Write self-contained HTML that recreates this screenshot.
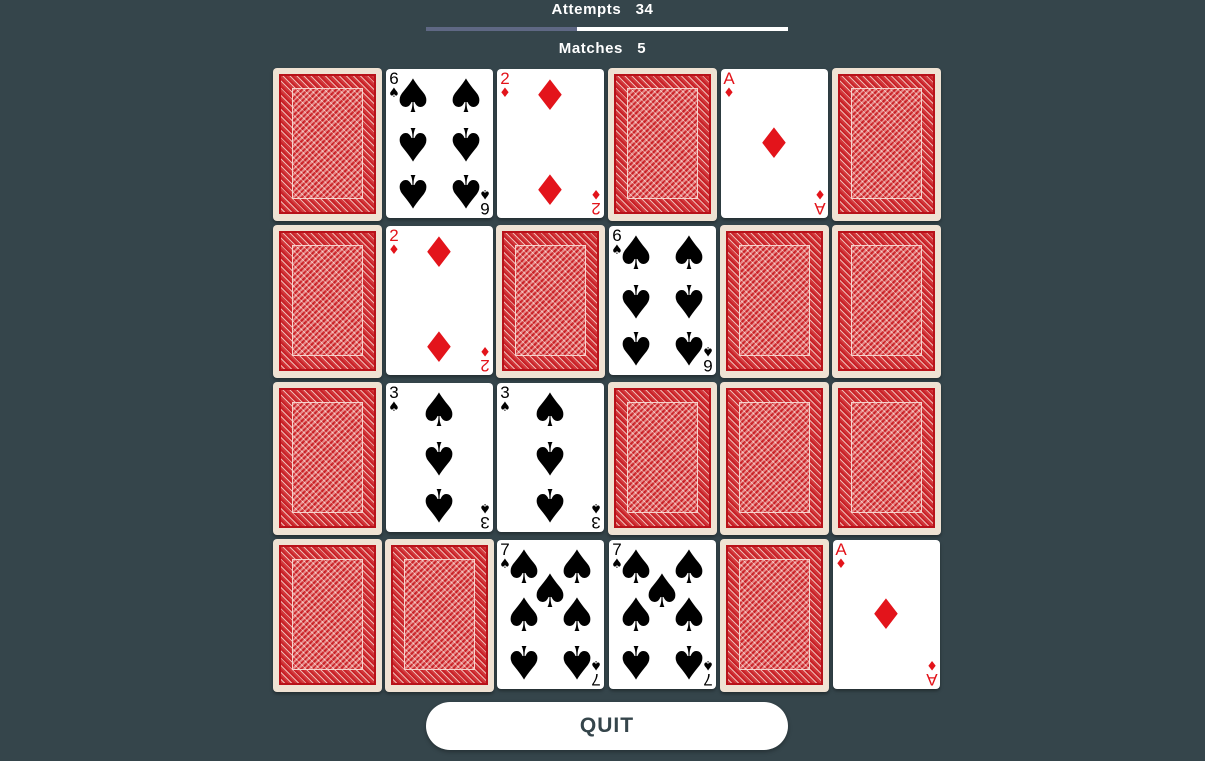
<!DOCTYPE html>
<html><head><style>
body{margin:0;width:1205px;height:761px;background:#35454b;position:relative;overflow:hidden;font-family:"Liberation Sans",sans-serif}
.t{position:absolute;left:0;width:1205px;text-align:center;color:#fff;font-size:15px;font-weight:bold;letter-spacing:0.6px}
.bar{position:absolute;left:426px;top:27px;width:362px;height:4px;background:#fff}
.bar i{position:absolute;left:0;top:0;width:151px;height:4px;background:#5f6884}
.b{position:absolute;width:109px;height:153px;border-radius:4px;background:#efe2d3;box-shadow:0 2px 3px rgba(0,0,0,.35)}
.b:before{content:"";position:absolute;left:6px;top:6px;right:6px;bottom:7px;border:2px solid #b8121a;background:repeating-linear-gradient(45deg,#d2393c 0 2px,#efb9b3 2px 3px,#c92128 3px 5px),#d23a3c;box-sizing:border-box}
.b:after{content:"";position:absolute;left:19px;top:20px;right:19px;bottom:22px;border:1px solid #f6d2cc;background:repeating-linear-gradient(-45deg,rgba(255,225,220,.5) 0 2px,rgba(200,30,35,.35) 2px 4px)}
.f{position:absolute;width:107px;height:149px;border-radius:4px;background:#fff;box-shadow:0 2px 3px rgba(0,0,0,.35)}
.p{position:absolute;font-family:"DejaVu Sans",sans-serif;font-size:46px;line-height:46px;transform:translate(-50%,-50%)}
.d .p{font-size:42px}
.r{transform:translate(-50%,-50%) rotate(180deg)}
.d{color:#e3141b}
.c{position:absolute;left:2px;top:2px;text-align:center;font-family:"Liberation Sans",sans-serif;font-size:17px;line-height:16px;width:12px}
.c small{display:block;font-family:"DejaVu Sans",sans-serif;font-size:13px;line-height:13px}
.c.br{left:auto;top:auto;right:2px;bottom:2px;transform:rotate(180deg)}
.q{position:absolute;left:426px;top:702px;width:362px;height:48px;border-radius:24px;background:#fff;color:#35454b;font-size:21px;font-weight:bold;text-align:center;line-height:48px;letter-spacing:1px;box-shadow:0 2px 4px rgba(0,0,0,.3)}
</style></head><body>
<div class="t" style="top:1px">Attempts&nbsp;&nbsp;&nbsp;34</div>
<div class="bar"><i></i></div>
<div class="t" style="top:40px">Matches&nbsp;&nbsp;&nbsp;5</div>

<div class="b" style="left:273px;top:68px"></div>
<div class="f" style="left:386px;top:69px"><div class="c">6<small>♠</small></div><div class="c br">6<small>♠</small></div>
<span class="p" style="left:27px;top:27px">♠</span><span class="p" style="left:80px;top:27px">♠</span><span class="p r" style="left:27px;top:75px">♠</span><span class="p r" style="left:80px;top:75px">♠</span><span class="p r" style="left:27px;top:122px">♠</span><span class="p r" style="left:80px;top:122px">♠</span></div>
<div class="f d" style="left:497px;top:69px"><div class="c">2<small>♦</small></div><div class="c br">2<small>♦</small></div>
<span class="p" style="left:53px;top:27px">♦</span><span class="p" style="left:53px;top:122px">♦</span></div>
<div class="b" style="left:608px;top:68px"></div>
<div class="f d" style="left:721px;top:69px"><div class="c">A<small>♦</small></div><div class="c br">A<small>♦</small></div>
<span class="p" style="left:53px;top:75px">♦</span></div>
<div class="b" style="left:832px;top:68px"></div>

<div class="b" style="left:273px;top:225px"></div>
<div class="f d" style="left:386px;top:226px"><div class="c">2<small>♦</small></div><div class="c br">2<small>♦</small></div>
<span class="p" style="left:53px;top:27px">♦</span><span class="p" style="left:53px;top:122px">♦</span></div>
<div class="b" style="left:496px;top:225px"></div>
<div class="f" style="left:609px;top:226px"><div class="c">6<small>♠</small></div><div class="c br">6<small>♠</small></div>
<span class="p" style="left:27px;top:27px">♠</span><span class="p" style="left:80px;top:27px">♠</span><span class="p r" style="left:27px;top:75px">♠</span><span class="p r" style="left:80px;top:75px">♠</span><span class="p r" style="left:27px;top:122px">♠</span><span class="p r" style="left:80px;top:122px">♠</span></div>
<div class="b" style="left:720px;top:225px"></div>
<div class="b" style="left:832px;top:225px"></div>

<div class="b" style="left:273px;top:382px"></div>
<div class="f" style="left:386px;top:383px"><div class="c">3<small>♠</small></div><div class="c br">3<small>♠</small></div>
<span class="p" style="left:53px;top:27px">♠</span><span class="p r" style="left:53px;top:75px">♠</span><span class="p r" style="left:53px;top:122px">♠</span></div>
<div class="f" style="left:497px;top:383px"><div class="c">3<small>♠</small></div><div class="c br">3<small>♠</small></div>
<span class="p" style="left:53px;top:27px">♠</span><span class="p r" style="left:53px;top:75px">♠</span><span class="p r" style="left:53px;top:122px">♠</span></div>
<div class="b" style="left:608px;top:382px"></div>
<div class="b" style="left:720px;top:382px"></div>
<div class="b" style="left:832px;top:382px"></div>

<div class="b" style="left:273px;top:539px"></div>
<div class="b" style="left:385px;top:539px"></div>
<div class="f" style="left:497px;top:540px"><div class="c">7<small>♠</small></div><div class="c br">7<small>♠</small></div>
<span class="p" style="left:27px;top:27px">♠</span><span class="p" style="left:80px;top:27px">♠</span><span class="p" style="left:53px;top:51px">♠</span><span class="p" style="left:27px;top:75px">♠</span><span class="p" style="left:80px;top:75px">♠</span><span class="p r" style="left:27px;top:122px">♠</span><span class="p r" style="left:80px;top:122px">♠</span></div>
<div class="f" style="left:609px;top:540px"><div class="c">7<small>♠</small></div><div class="c br">7<small>♠</small></div>
<span class="p" style="left:27px;top:27px">♠</span><span class="p" style="left:80px;top:27px">♠</span><span class="p" style="left:53px;top:51px">♠</span><span class="p" style="left:27px;top:75px">♠</span><span class="p" style="left:80px;top:75px">♠</span><span class="p r" style="left:27px;top:122px">♠</span><span class="p r" style="left:80px;top:122px">♠</span></div>
<div class="b" style="left:720px;top:539px"></div>
<div class="f d" style="left:833px;top:540px"><div class="c">A<small>♦</small></div><div class="c br">A<small>♦</small></div>
<span class="p" style="left:53px;top:75px">♦</span></div>

<div class="q">QUIT</div>
</body></html>
